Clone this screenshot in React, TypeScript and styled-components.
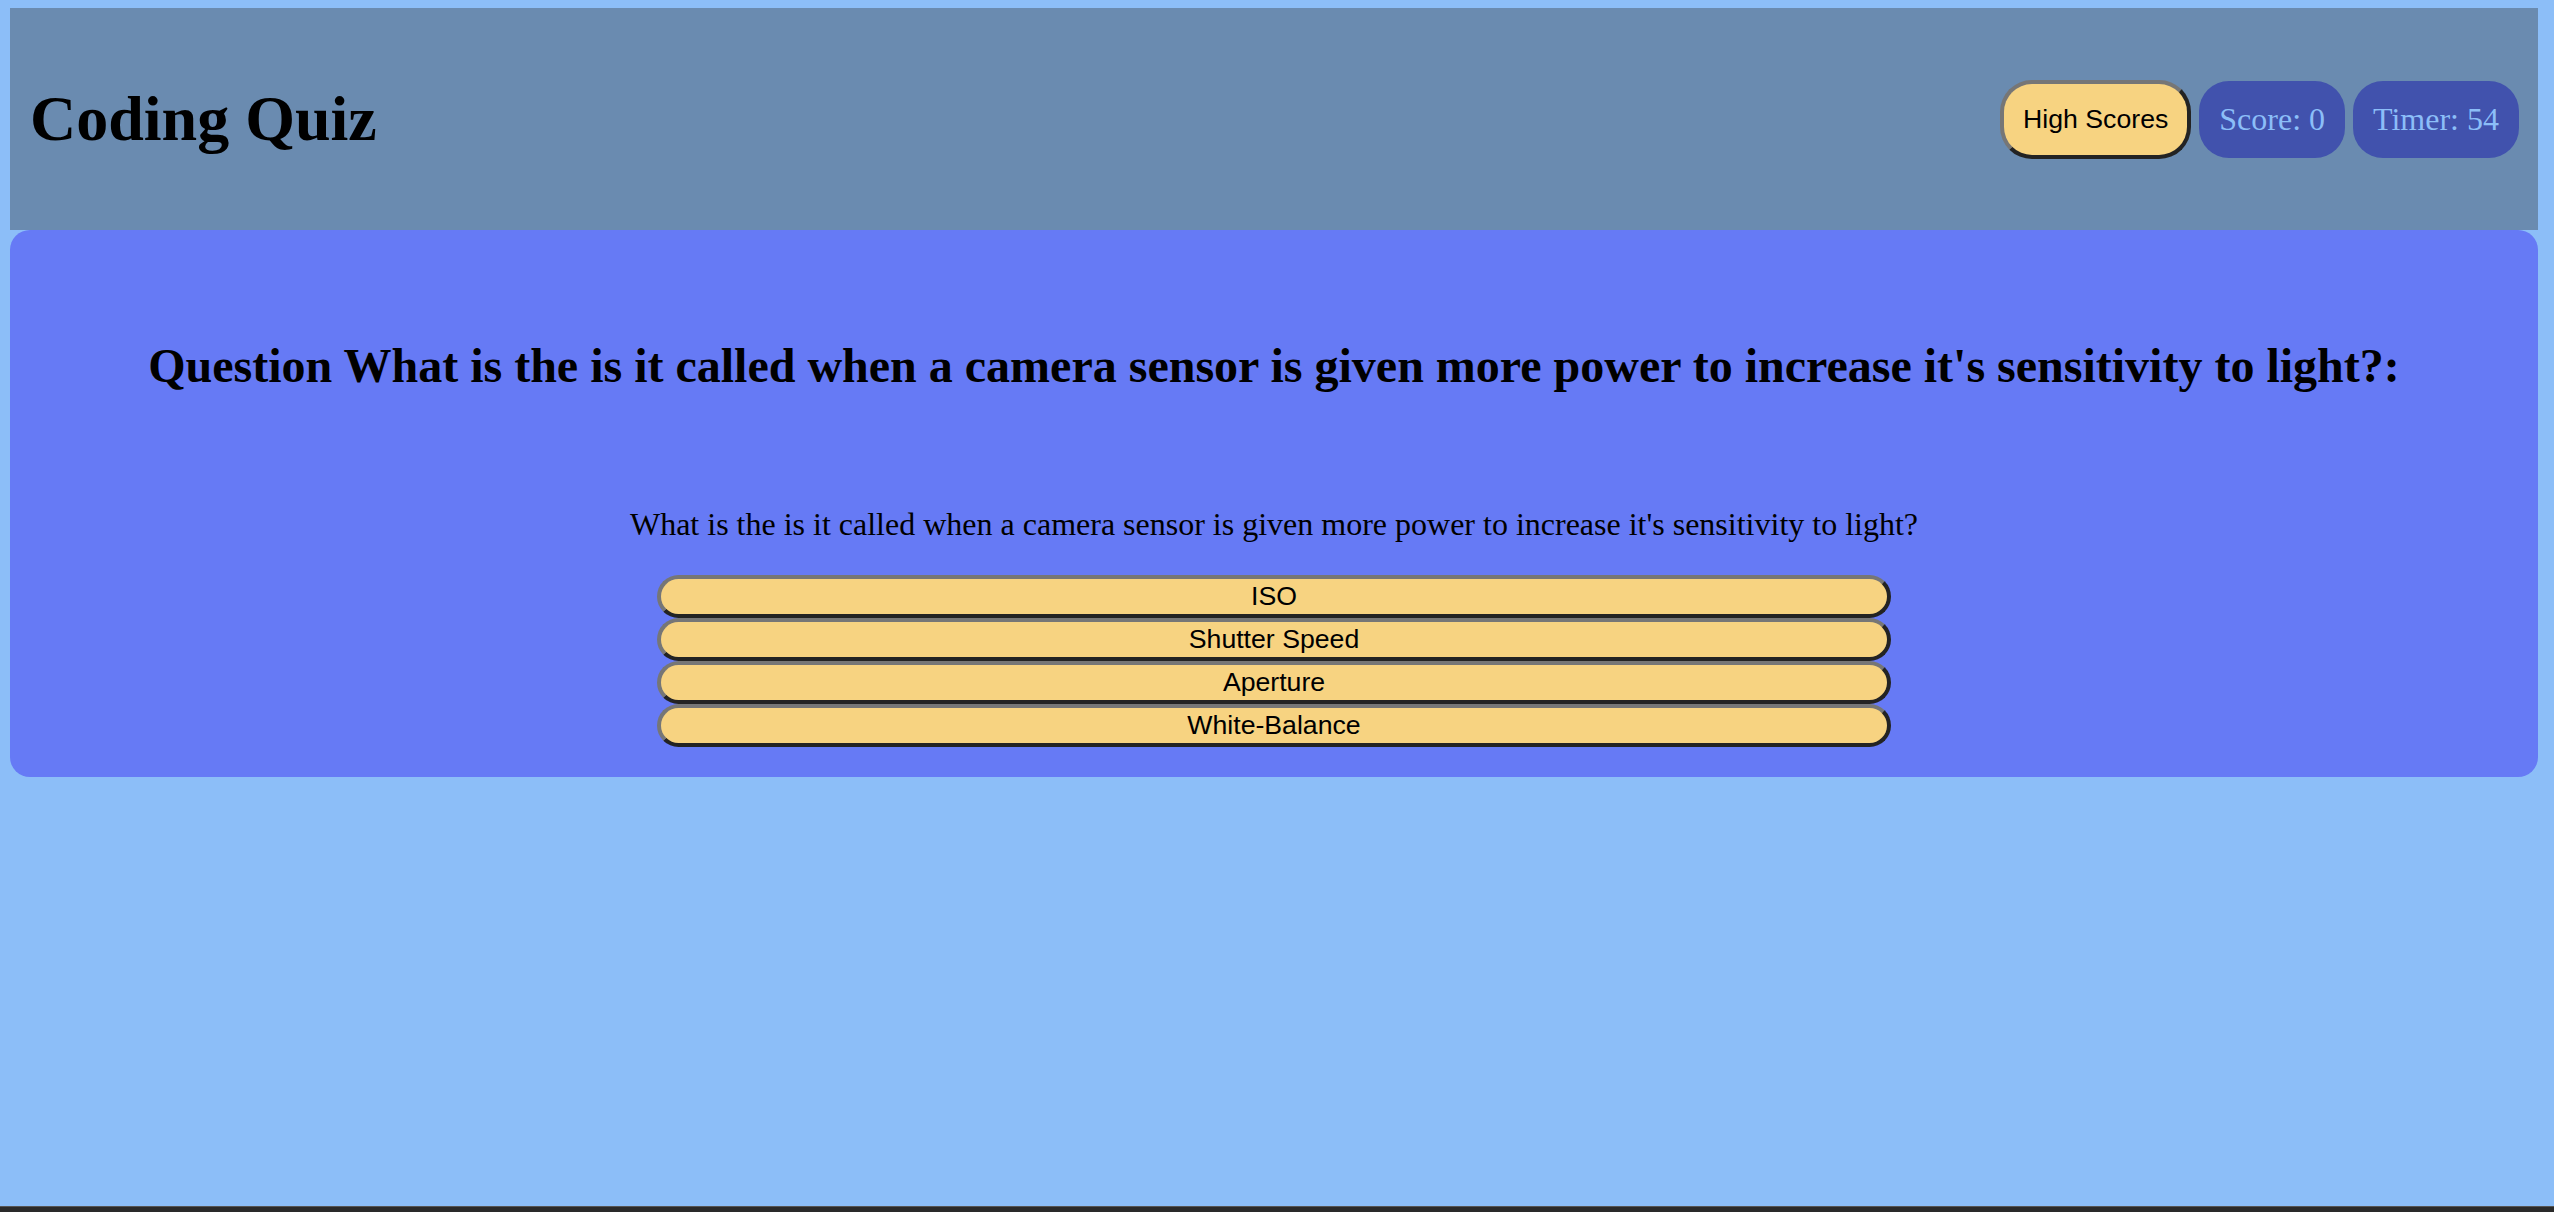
import React from "react";
import styled, { createGlobalStyle } from "styled-components";

const GlobalStyle = createGlobalStyle`
  html, body {
    margin: 0;
    padding: 0;
    background: #8cbef8;
  }
  body {
    font-family: "Liberation Serif", "Times New Roman", serif;
  }
`;

const Page = styled.div`
  min-height: 100vh;
  display: flex;
  flex-direction: column;
  background: #8cbef8;
`;

const Content = styled.div`
  flex: 1;
  padding: 8px 16px 0 10px;
`;

const Header = styled.header`
  height: 222px;
  background: #6a8bb0;
  display: flex;
  align-items: center;
  justify-content: space-between;
  padding: 0 19px 0 20px;
  box-sizing: border-box;
`;

const Title = styled.h1`
  margin: 0;
  font-family: "Liberation Serif", "Times New Roman", serif;
  font-weight: bold;
  font-size: 64px;
  color: #000;
`;

const HeaderActions = styled.div`
  display: flex;
  align-items: center;
  gap: 8px;
`;

const HighScoresButton = styled.button`
  font-family: "Liberation Sans", Arial, sans-serif;
  font-size: 26.67px;
  color: #000;
  background: #f7d381;
  padding: 20px 19px;
  border-width: 4px;
  border-style: solid;
  border-color: #767676 #232323 #232323 #767676;
  border-radius: 32px;
  cursor: pointer;
`;

const Pill = styled.div`
  font-family: "Liberation Serif", "Times New Roman", serif;
  font-size: 32px;
  color: #8cbef8;
  background: #4152ad;
  padding: 20px 20px;
  border-radius: 30px;
`;

const Card = styled.main`
  background: #667af5;
  border-radius: 20px;
  padding: 0 0 30px;
  display: flex;
  flex-direction: column;
  align-items: center;
`;

const QuestionHeading = styled.h2`
  margin: 108px 0 0;
  font-family: "Liberation Serif", "Times New Roman", serif;
  font-weight: bold;
  font-size: 48px;
  color: #000;
  text-align: center;
`;

const QuestionText = styled.p`
  margin: 113px 0 0;
  font-family: "Liberation Serif", "Times New Roman", serif;
  font-size: 32px;
  color: #000;
  text-align: center;
`;

const Choices = styled.div`
  margin-top: 32px;
  width: 1234px;
  display: flex;
  flex-direction: column;
`;

const ChoiceButton = styled.button`
  display: block;
  width: 100%;
  height: 43px;
  font-family: "Liberation Sans", Arial, sans-serif;
  font-size: 26.67px;
  color: #000;
  background: #f7d381;
  padding: 0 12px;
  border-width: 4px;
  border-style: solid;
  border-color: #767676 #232323 #232323 #767676;
  border-radius: 22px;
  cursor: pointer;
  line-height: 1;
`;

const BottomBar = styled.div`
  height: 6px;
  background: #2a2a2a;
  border-top: 1px solid #555;
  box-sizing: border-box;
`;

const question =
  "What is the is it called when a camera sensor is given more power to increase it's sensitivity to light?";
const choices = ["ISO", "Shutter Speed", "Aperture", "White-Balance"];

export default function App() {
  return (
    <>
      <GlobalStyle />
      <Page>
        <Content>
          <Header>
            <Title>Coding Quiz</Title>
            <HeaderActions>
              <HighScoresButton>High Scores</HighScoresButton>
              <Pill>Score: 0</Pill>
              <Pill>Timer: 54</Pill>
            </HeaderActions>
          </Header>
          <Card>
            <QuestionHeading>Question {question}:</QuestionHeading>
            <QuestionText>{question}</QuestionText>
            <Choices>
              {choices.map((c) => (
                <ChoiceButton key={c}>{c}</ChoiceButton>
              ))}
            </Choices>
          </Card>
        </Content>
        <BottomBar />
      </Page>
    </>
  );
}
